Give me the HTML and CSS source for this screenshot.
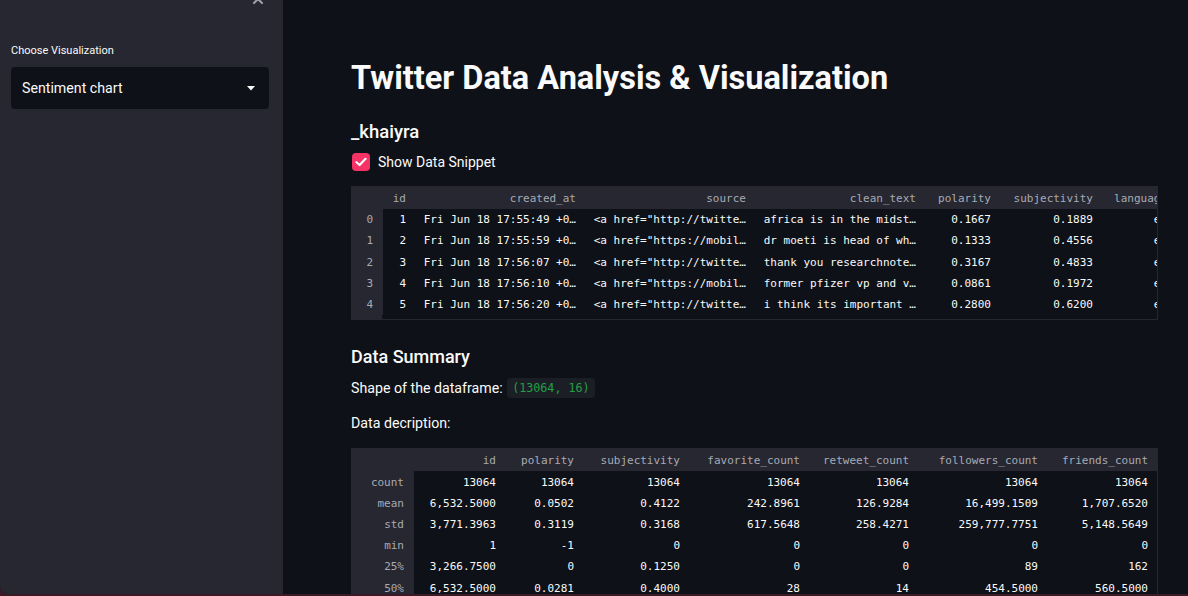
FILE: index.html
```html
<!DOCTYPE html>
<html>
<head>
<meta charset="utf-8">
<link rel="stylesheet" href="styles.css">
</head>
<body>
<div class="app">
  <aside class="sidebar">
    <div class="sb-top">
      <button class="close" aria-label="close">
        <svg width="12" height="12" viewBox="0 0 12 12"><path d="M2 2 L10 10 M10 2 L2 10" stroke="#9b9ca4" stroke-width="2.2" stroke-linecap="round"/></svg>
      </button>
    </div>
    <label class="sb-label">Choose Visualization</label>
    <div class="select">
      <span>Sentiment chart</span>
      <svg class="caret" width="8" height="5" viewBox="0 0 8 5"><path d="M0 0 H8 L4 4.5 Z" fill="#fafafa"/></svg>
    </div>
  </aside>
  <main class="main">
    <h1 class="title">Twitter Data Analysis &amp; Visualization</h1>
    <h2 class="user">_khaiyra</h2>
    <div class="check-row">
      <span class="checkbox">
        <svg width="12" height="10" viewBox="0 0 12 10"><path d="M1.5 5.2 L4.6 8 L10.5 1.8" fill="none" stroke="#fff" stroke-width="2.2" stroke-linecap="round" stroke-linejoin="round"/></svg>
      </span>
      <span class="check-label">Show Data Snippet</span>
    </div>

    <div class="df df1">
      <table>
        <colgroup>
          <col style="width:31px"><col style="width:33px"><col style="width:170px"><col style="width:170px"><col style="width:170px"><col style="width:75px"><col style="width:102px"><col style="width:74px">
        </colgroup>
        <thead>
          <tr><th></th><th>id</th><th>created_at</th><th>source</th><th>clean_text</th><th>polarity</th><th>subjectivity</th><th>language</th></tr>
        </thead>
        <tbody>
          <tr><th>0</th><td>1</td><td>Fri Jun 18 17:55:49 +0…</td><td>&lt;a href="http://twitte…</td><td>africa is in the midst…</td><td>0.1667</td><td>0.1889</td><td>en</td></tr>
          <tr><th>1</th><td>2</td><td>Fri Jun 18 17:55:59 +0…</td><td>&lt;a href="https://mobil…</td><td>dr moeti is head of wh…</td><td>0.1333</td><td>0.4556</td><td>en</td></tr>
          <tr><th>2</th><td>3</td><td>Fri Jun 18 17:56:07 +0…</td><td>&lt;a href="http://twitte…</td><td>thank you researchnote…</td><td>0.3167</td><td>0.4833</td><td>en</td></tr>
          <tr><th>3</th><td>4</td><td>Fri Jun 18 17:56:10 +0…</td><td>&lt;a href="https://mobil…</td><td>former pfizer vp and v…</td><td>0.0861</td><td>0.1972</td><td>en</td></tr>
          <tr><th>4</th><td>5</td><td>Fri Jun 18 17:56:20 +0…</td><td>&lt;a href="http://twitte…</td><td>i think its important …</td><td>0.2800</td><td>0.6200</td><td>en</td></tr>
        </tbody>
      </table>
    </div>

    <h2 class="section">Data Summary</h2>
    <p class="shape">Shape of the dataframe: <code class="chip">(13064, 16)</code></p>
    <p class="desc">Data decription:</p>

    <div class="df df2">
      <table>
        <colgroup>
          <col style="width:62px"><col style="width:92px"><col style="width:78px"><col style="width:106px"><col style="width:120px"><col style="width:109px"><col style="width:129px"><col style="width:110px">
        </colgroup>
        <thead>
          <tr><th></th><th>id</th><th>polarity</th><th>subjectivity</th><th>favorite_count</th><th>retweet_count</th><th>followers_count</th><th>friends_count</th></tr>
        </thead>
        <tbody>
          <tr><th>count</th><td>13064</td><td>13064</td><td>13064</td><td>13064</td><td>13064</td><td>13064</td><td>13064</td></tr>
          <tr><th>mean</th><td>6,532.5000</td><td>0.0502</td><td>0.4122</td><td>242.8961</td><td>126.9284</td><td>16,499.1509</td><td>1,707.6520</td></tr>
          <tr><th>std</th><td>3,771.3963</td><td>0.3119</td><td>0.3168</td><td>617.5648</td><td>258.4271</td><td>259,777.7751</td><td>5,148.5649</td></tr>
          <tr><th>min</th><td>1</td><td>-1</td><td>0</td><td>0</td><td>0</td><td>0</td><td>0</td></tr>
          <tr><th>25%</th><td>3,266.7500</td><td>0</td><td>0.1250</td><td>0</td><td>0</td><td>89</td><td>162</td></tr>
          <tr><th>50%</th><td>6,532.5000</td><td>0.0281</td><td>0.4000</td><td>28</td><td>14</td><td>454.5000</td><td>560.5000</td></tr>
        </tbody>
      </table>
    </div>
  </main>
</div>
</body>
</html>
```

FILE: styles.css
```css
* { box-sizing: border-box; }
html, body { margin: 0; padding: 0; }
body {
  background: #3a1a26;
  width: 1188px;
  height: 596px;
  overflow: hidden;
  font-family: Roboto, "Noto Sans", sans-serif;
  color: #fafafa;
}
.app {
  display: flex;
  height: 594px;
  overflow: hidden;
  border-bottom-left-radius: 8px;
  background: #0e1117;
}
.sidebar {
  width: 283px;
  flex: none;
  background: #262730;
  padding: 0 14px 0 11px;
}
.sb-top {
  display: flex;
  justify-content: flex-end;
  height: 0;
  padding-right: 5px;
}
.close {
  margin-top: -7px;
  padding: 0;
  border: 0;
  background: none;
  height: 12px;
  width: 12px;
}
.close svg { display: block; }
.sb-label {
  display: block;
  margin-top: 43px;
  font-size: 11px;
  line-height: 15px;
  color: #fafafa;
}
.select {
  margin-top: 9px;
  height: 42px;
  background: #0e1117;
  border-radius: 4px;
  display: flex;
  align-items: center;
  justify-content: space-between;
  padding: 0 14px 0 11px;
  font-size: 14.2px;
}
.caret { display: block; }

.main {
  flex: 1;
  min-width: 0;
  padding: 58px 30px 0 68px;
}
.title {
  margin: 0;
  font-size: 32.5px;
  line-height: 40px;
  font-weight: 700;
}
.user {
  margin: 20px 0 0;
  font-size: 18.5px;
  line-height: 28px;
  font-weight: 500;
}
.check-row {
  margin-top: 6px;
  height: 20px;
  display: flex;
  align-items: center;
  gap: 8px;
  padding-left: 1px;
}
.checkbox {
  width: 18px;
  height: 18px;
  border-radius: 4px;
  background: #f63366;
  display: flex;
  align-items: center;
  justify-content: center;
}
.check-label { font-size: 14px; }

.df {
  width: 100%;
  overflow: hidden;
  border: 1px solid #262730;
  font-family: "DejaVu Sans Mono", "Liberation Mono", monospace;
  font-size: 11px;
}
.df table {
  border-collapse: collapse;
  table-layout: fixed;
}
.df1 table { width: 825px; }
.df2 table { width: 806px; }
.df th, .df td {
  padding: 0 10px 0 0;
  text-align: right;
  white-space: nowrap;
  overflow: hidden;
  font-weight: 400;
}
.df thead th {
  background: #262730;
  color: #a8abb5;
  height: 22px;
}
.df tbody th {
  background: #262730;
  color: #a8abb5;
}
.df tbody td { color: #fafafa; }
.df tbody tr { height: 21.3px; }
.df1 {
  margin-top: 14px;
  padding-bottom: 4px;
  background: linear-gradient(to right, #262730 30px, #0e1117 30px);
}
.df2 { margin-top: 13px; }
.df2 tbody tr { height: 21.2px; }

.section {
  margin: 23px 0 0;
  font-size: 18px;
  line-height: 28px;
  font-weight: 500;
}
.shape {
  margin: 5px 0 0;
  font-size: 14.2px;
  line-height: 24px;
}
.chip {
  display: inline-block;
  font-family: "DejaVu Sans Mono", "Liberation Mono", monospace;
  font-size: 11.7px;
  line-height: 20px;
  padding: 0 5px;
  margin-left: 1px;
  background: #1c1e26;
  color: #21a045;
  border-radius: 4px;
  vertical-align: 1px;
}
.desc {
  margin: 11px 0 0;
  font-size: 14.2px;
  line-height: 24px;
}
```
